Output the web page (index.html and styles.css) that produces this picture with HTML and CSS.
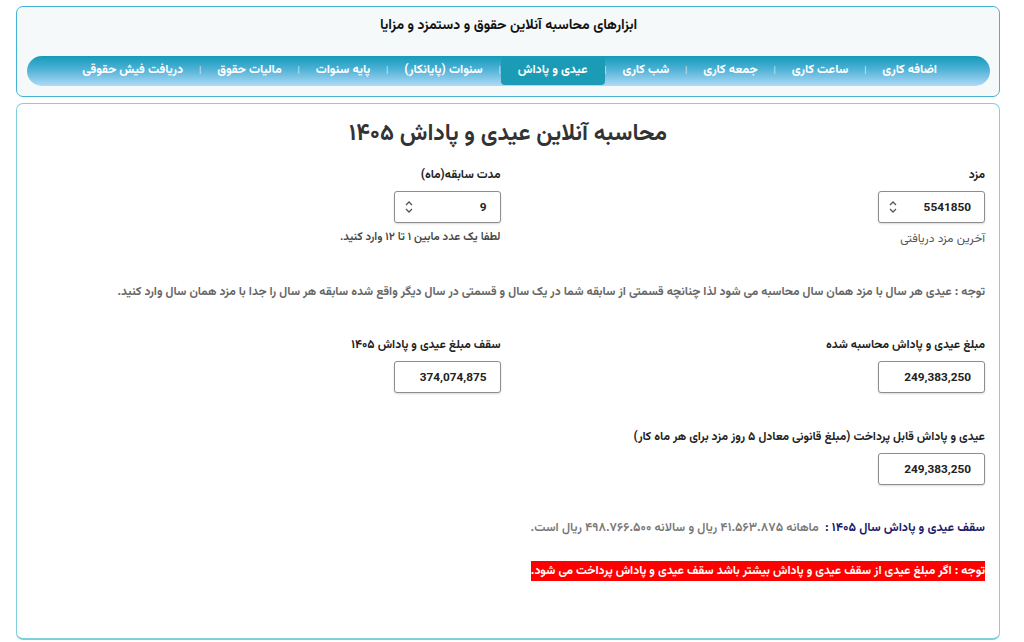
FILE: index.html
```html
<!DOCTYPE html>
<html lang="fa" dir="rtl">
<head>
<meta charset="utf-8">
<title>محاسبه آنلاین عیدی و پاداش ۱۴۰۵</title>
<link rel="stylesheet" href="styles.css">
</head>
<body>
<div class="page">
  <header class="tools">
    <div class="tools-title">ابزارهای محاسبه آنلاین حقوق و دستمزد و مزایا</div>
    <nav class="menu">
      <a class="item">اضافه کاری</a><span class="sep">|</span>
      <a class="item">ساعت کاری</a><span class="sep">|</span>
      <a class="item">جمعه کاری</a><span class="sep">|</span>
      <a class="item">شب کاری</a><span class="sep">|</span>
      <a class="item active">عیدی و پاداش</a><span class="sep">|</span>
      <a class="item">سنوات (پایانکار)</a><span class="sep">|</span>
      <a class="item">پایه سنوات</a><span class="sep">|</span>
      <a class="item">مالیات حقوق</a><span class="sep">|</span>
      <a class="item">دریافت فیش حقوقی</a>
    </nav>
  </header>

  <main class="calc">
    <h1 class="calc-title">محاسبه آنلاین عیدی و پاداش ۱۴۰۵</h1>

    <div class="row">
      <div class="field">
        <label class="label">مزد</label>
        <div class="box"><span class="val">5541850</span><svg class="spin" viewBox="0 0 8 14" width="8" height="14"><path d="M1 5 L4 2 L7 5 M1 9 L4 12 L7 9" fill="none" stroke="#555" stroke-width="1.3"/></svg></div>
        <div class="help">آخرین مزد دریافتی</div>
      </div>
      <div class="field">
        <label class="label">مدت سابقه(ماه)</label>
        <div class="box"><span class="val">9</span><svg class="spin" viewBox="0 0 8 14" width="8" height="14"><path d="M1 5 L4 2 L7 5 M1 9 L4 12 L7 9" fill="none" stroke="#555" stroke-width="1.3"/></svg></div>
        <div class="help dark">لطفا یک عدد مابین ۱ تا ۱۲ وارد کنید.</div>
      </div>
    </div>

    <p class="note">توجه : عیدی هر سال با مزد همان سال محاسبه می شود لذا چنانچه قسمتی از سابقه شما در یک سال و قسمتی در سال دیگر واقع شده سابقه هر سال را جدا با مزد همان سال وارد کنید.</p>

    <div class="row">
      <div class="field">
        <label class="label">مبلغ عیدی و پاداش محاسبه شده</label>
        <div class="box"><span class="val">249,383,250</span></div>
      </div>
      <div class="field">
        <label class="label">سقف مبلغ عیدی و پاداش ۱۴۰۵</label>
        <div class="box"><span class="val">374,074,875</span></div>
      </div>
    </div>

    <div class="row single">
      <div class="field">
        <label class="label">عیدی و پاداش قابل پرداخت (مبلغ قانونی معادل ۵ روز مزد برای هر ماه کار)</label>
        <div class="box"><span class="val">249,383,250</span></div>
      </div>
    </div>

    <p class="cap"><strong class="cap-head">سقف عیدی و پاداش سال ۱۴۰۵ :</strong>&nbsp; ماهانه ۴۱.۵۶۳.۸۷۵ ریال و سالانه ۴۹۸.۷۶۶.۵۰۰ ریال است.</p>

    <p class="warn"><span class="warn-text">توجه : اگر مبلغ عیدی از سقف عیدی و پاداش بیشتر باشد سقف عیدی و پاداش پرداخت می شود.</span></p>
  </main>
</div>
</body>
</html>
```

FILE: styles.css
```css
* { box-sizing: border-box; }
html, body { margin: 0; padding: 0; background: #fff; }
body {
  font-family: "Vazirmatn", "Noto Sans Arabic", "DejaVu Sans", sans-serif;
  color: #222;
  font-size: 12px;
}
.page {
  width: 984px;
  margin: 6px 24px 0 16px;
}
.tools {
  background: #f5f9fa;
  border: 1px solid #42b3d3;
  border-radius: 7px;
  height: 91px;
  padding: 0 9px 0 10px;
}
.tools-title {
  text-align: center;
  font-weight: 700;
  font-size: 14px;
  color: #111;
  padding-top: 8px;
  height: 49px;
}
.menu {
  height: 30px;
  border-radius: 15px;
  background: linear-gradient(to bottom, #159ab9 0%, #4fb2d6 45%, #b1d9f6 100%);
  display: flex;
  align-items: center;
  padding-right: 37px;
}
.item {
  color: #fff;
  font-weight: 700;
  font-size: 12.3px;
  padding: 0 16px;
  height: 28px;
  line-height: 27px;
  white-space: nowrap;
}
.item.active {
  background: #1b9bb5;
  border-radius: 4px;
  padding: 0 17px;
}
.sep {
  color: #d9eef7;
  font-size: 9px;
  width: 2px;
  text-align: center;
}
.calc {
  margin-top: 6px;
  border: 1px solid #7fd0df;
  border-bottom-width: 2px;
  border-radius: 7px;
  height: 537px;
  padding: 10px 14px 0;
}
.calc-title {
  margin: 0;
  text-align: center;
  font-size: 23px;
  font-weight: 700;
  color: #333;
  height: 52px;
  line-height: 40px;
}
.row {
  display: grid;
  grid-template-columns: 1fr 1fr;
  column-gap: 15px;
}
.field { display: flex; flex-direction: column; align-items: flex-start; }
.label {
  font-weight: 700;
  font-size: 12px;
  color: #222;
  height: 19px;
  line-height: 19px;
  margin-bottom: 6px;
}
.box {
  width: 107px;
  height: 32px;
  border: 1px solid #8d8d8d;
  border-radius: 3px;
  box-shadow: 0 1px 2px rgba(0,0,0,0.15);
  display: flex;
  align-items: center;
  justify-content: space-between;
  padding: 0 13px 0 10px;
  background: #fff;
}
.val {
  font-family: "Roboto", "Liberation Sans", sans-serif;
  font-weight: 700;
  font-size: 11.8px;
  color: #222;
  direction: ltr;
}
.spin { display: block; }
.help {
  font-size: 12px;
  color: #555;
  margin-top: 8px;
  line-height: 16px;
}
.help.dark { color: #444; font-weight: 600; font-size: 11.4px; margin-top: 6px; }
.note {
  margin: 36px 0 35px;
  font-size: 12px;
  font-weight: 700;
  color: #666;
  line-height: 18px;
}
.row.single { margin-top: 35px; }
.cap {
  margin: 34px 0 0;
  font-size: 12.4px;
  font-weight: 600;
  color: #777;
  line-height: 18px;
}
.cap-head { color: #1d1b6b; font-weight: 700; }
.warn {
  margin: 25px 0 0;
  line-height: 18px;
}
.warn-text {
  background: #ff0000;
  color: #fff;
  font-weight: 700;
  font-size: 12px;
  padding: 1px 0;
}
```
